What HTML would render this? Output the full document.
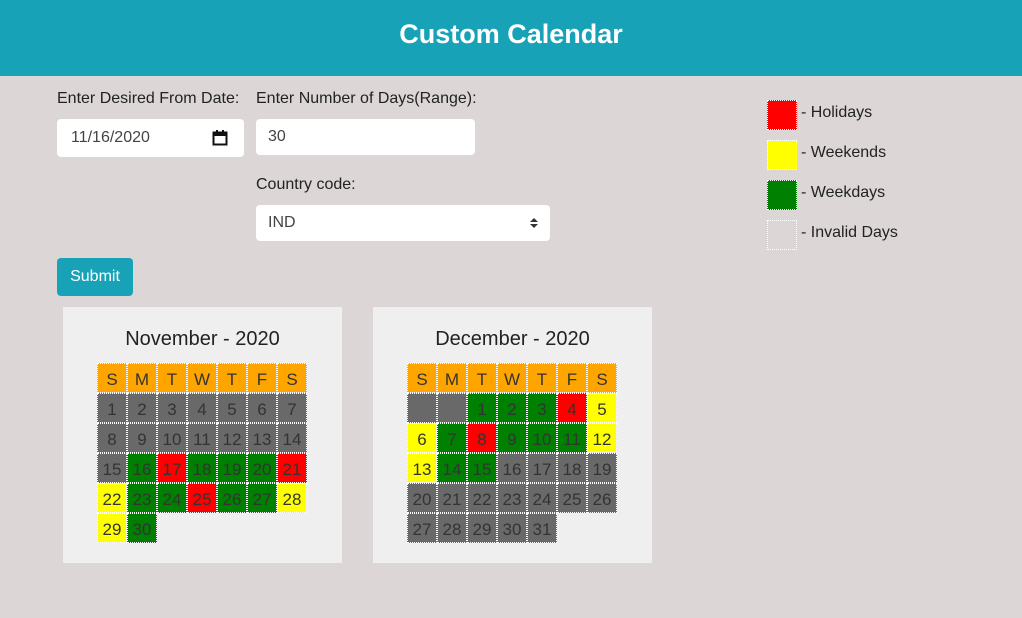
<!DOCTYPE html>
<html><head><meta charset="utf-8"><style>
body{margin:0;width:1022px;height:618px;background:#dcd6d6;font-family:"Liberation Sans",sans-serif;color:#222;position:relative;overflow:hidden}
.hdr{position:absolute;left:0;top:0;width:1022px;height:76px;background:#17a2b8;color:#fff;text-align:center;font:bold 27px/68px "Comic Sans MS","Liberation Sans",sans-serif}
.lbl{position:absolute;font-size:16px;color:#222}
.inp{position:absolute;background:#fff;border-radius:4px;font-size:16px;color:#444;box-sizing:border-box;padding-left:12px}
.btn{position:absolute;left:57px;top:258px;width:76px;height:38px;background:#17a2b8;border-radius:4px;color:#fff;font-size:16px;line-height:38px;text-align:center}
.card{position:absolute;top:307px;width:279px;height:256px;background:#efefef}
.card h3{margin:0;position:absolute;top:21px;width:100%;text-align:center;font-weight:normal;font-size:20px;color:#222}
.grid{position:absolute;top:56px;left:34px;display:grid;grid-template-columns:repeat(7,30px);grid-auto-rows:30px}
.grid div{box-sizing:border-box;border:1px dotted #fff;text-align:center;line-height:32px;font-size:17px;color:#333}
.h{background:#ffa500}.g{background:#696969}.G{background:#008000}.R{background:#f00}.Y{background:#ff0}
.lg{position:absolute;left:767px;width:30px;height:30px;box-sizing:border-box;border:1px dotted #fff}
.lt{position:absolute;left:801px;font-size:16px}
</style></head><body>
<div class="hdr">Custom Calendar</div>
<div class="lbl" style="left:57px;top:90px">Enter Desired From Date:</div>
<div class="lbl" style="left:256px;top:90px">Enter Number of Days(Range):</div>
<div class="inp" style="left:57px;top:119px;width:187px;height:38px;line-height:38px;padding-left:14px">11/16/2020
<svg style="position:absolute;right:16px;top:11px" width="16" height="16" viewBox="0 0 16 16"><rect x="1.5" y="2.5" width="13" height="12" fill="none" stroke="#111" stroke-width="2"/><rect x="1" y="2" width="14" height="4" fill="#111"/><rect x="4" y="0" width="2" height="3" fill="#111"/><rect x="10" y="0" width="2" height="3" fill="#111"/></svg></div>
<div class="inp" style="left:256px;top:119px;width:219px;height:36px;line-height:36px">30</div>
<div class="lbl" style="left:256px;top:176px">Country code:</div>
<div class="inp" style="left:256px;top:205px;width:294px;height:36px;line-height:36px">IND
<svg style="position:absolute;right:12px;top:13px" width="8" height="10" viewBox="0 0 8 10"><path d="M0 4L4 0L8 4Z M0 6L4 10L8 6Z" fill="#333"/></svg></div>
<div class="btn">Submit</div>

<div class="lg R" style="top:100px"></div><div class="lt" style="top:104px">- Holidays</div>
<div class="lg Y" style="top:140px"></div><div class="lt" style="top:144px">- Weekends</div>
<div class="lg G" style="top:180px"></div><div class="lt" style="top:184px">- Weekdays</div>
<div class="lg" style="top:220px"></div><div class="lt" style="top:224px">- Invalid Days</div>

<div class="card" style="left:63px"><h3>November - 2020</h3>
<div class="grid">
<div class="h">S</div><div class="h">M</div><div class="h">T</div><div class="h">W</div><div class="h">T</div><div class="h">F</div><div class="h">S</div>
<div class="g">1</div><div class="g">2</div><div class="g">3</div><div class="g">4</div><div class="g">5</div><div class="g">6</div><div class="g">7</div>
<div class="g">8</div><div class="g">9</div><div class="g">10</div><div class="g">11</div><div class="g">12</div><div class="g">13</div><div class="g">14</div>
<div class="g">15</div><div class="G">16</div><div class="R">17</div><div class="G">18</div><div class="G">19</div><div class="G">20</div><div class="R">21</div>
<div class="Y">22</div><div class="G">23</div><div class="G">24</div><div class="R">25</div><div class="G">26</div><div class="G">27</div><div class="Y">28</div>
<div class="Y">29</div><div class="G">30</div>
</div></div>

<div class="card" style="left:373px"><h3>December - 2020</h3>
<div class="grid">
<div class="h">S</div><div class="h">M</div><div class="h">T</div><div class="h">W</div><div class="h">T</div><div class="h">F</div><div class="h">S</div>
<div class="g"></div><div class="g"></div><div class="G">1</div><div class="G">2</div><div class="G">3</div><div class="R">4</div><div class="Y">5</div>
<div class="Y">6</div><div class="G">7</div><div class="R">8</div><div class="G">9</div><div class="G">10</div><div class="G">11</div><div class="Y">12</div>
<div class="Y">13</div><div class="G">14</div><div class="G">15</div><div class="g">16</div><div class="g">17</div><div class="g">18</div><div class="g">19</div>
<div class="g">20</div><div class="g">21</div><div class="g">22</div><div class="g">23</div><div class="g">24</div><div class="g">25</div><div class="g">26</div>
<div class="g">27</div><div class="g">28</div><div class="g">29</div><div class="g">30</div><div class="g">31</div>
</div></div>
</body></html>
